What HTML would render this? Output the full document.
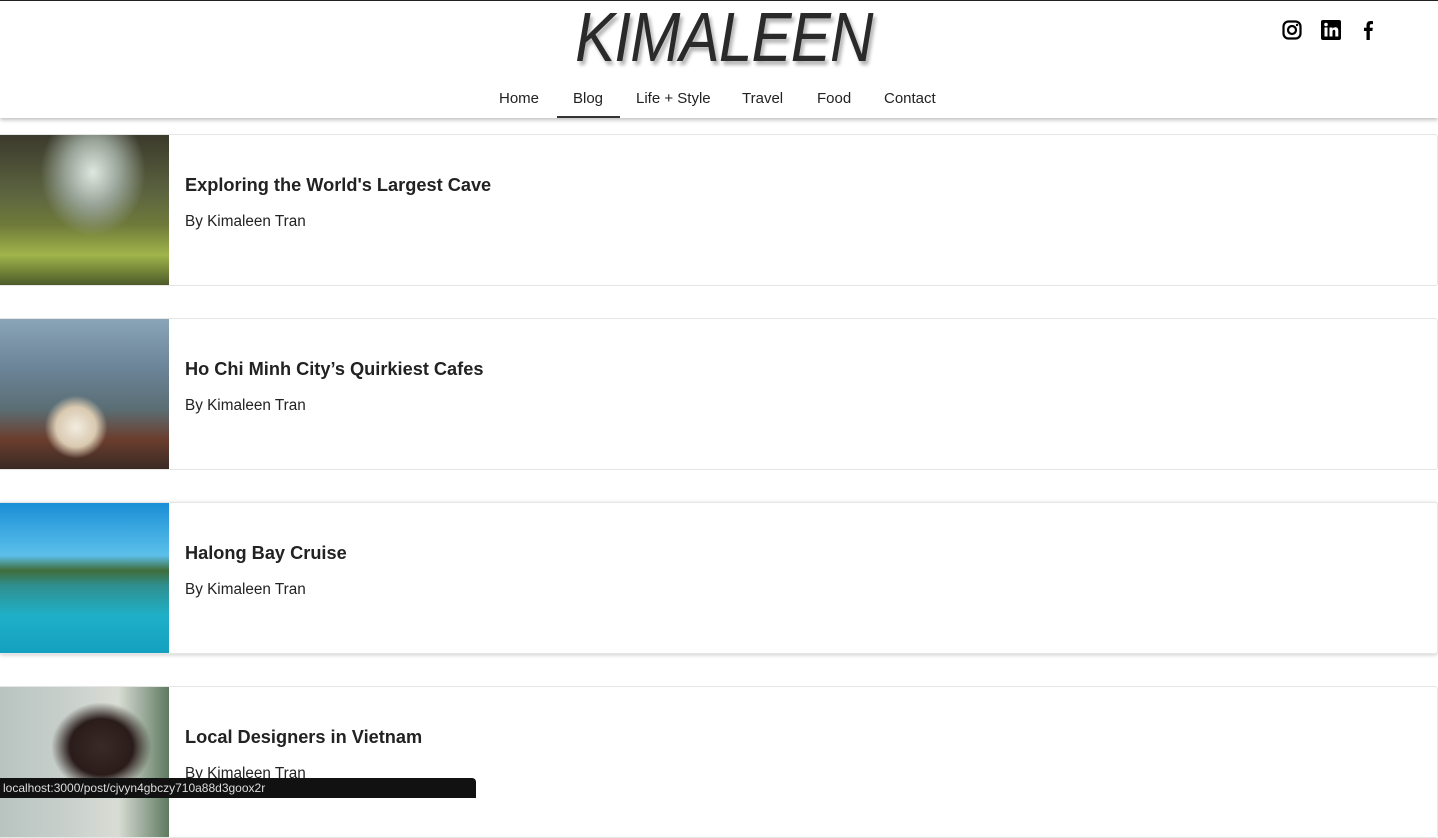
<!DOCTYPE html>
<html><head><style>
body{margin:0;width:1438px;height:798px;overflow:hidden;background:#fff;font-family:"Liberation Sans",sans-serif;position:relative}
.top{position:absolute;left:0;top:0;width:1438px;height:1px;background:#222}
header{position:absolute;left:0;top:1px;width:1438px;height:117px;background:#fff;box-shadow:0 2px 4px rgba(0,0,0,.25);z-index:2}
.logo{position:absolute;left:552px;top:-4px;width:330px;text-align:center;font-size:70px;font-style:italic;font-weight:normal;color:#2a2a2a;transform:scaleX(.86);transform-origin:center;letter-spacing:-1px;text-shadow:3px 4px 4px rgba(0,0,0,.3);line-height:80px}
nav{position:absolute;top:85px;left:0;width:1438px;text-align:center;font-size:15px;color:#222}
nav span{position:absolute;top:4px}
.ul{position:absolute;left:557px;top:115px;width:63px;height:2px;background:#333}
.icons svg{position:absolute;top:19px}
.card{position:absolute;left:0;width:1437px;height:150px;border:1px solid #e6e6e6;border-left:none;border-radius:0 3px 3px 0;background:#fff}
.img{position:absolute;left:0;top:0;width:169px;height:150px}
.t{position:absolute;left:185px;top:40px;font-size:18.2px;font-weight:bold;color:#222}
.b{position:absolute;left:185px;top:78px;font-size:15.3px;color:#222}
.status{position:absolute;left:0;top:778px;width:476px;height:20px;background:#111;color:#ddd;font-size:12px;line-height:20px;padding-left:3px;box-sizing:border-box;border-radius:0 4px 0 0;z-index:5}
</style></head><body>
<div class="top"></div>
<header>
<div class="logo">KIMALEEN</div>
<nav>
<span style="left:499px">Home</span>
<span style="left:573px">Blog</span>
<span style="left:636px">Life + Style</span>
<span style="left:742px">Travel</span>
<span style="left:817px">Food</span>
<span style="left:884px">Contact</span>
</nav>
<div class="ul"></div>
<div class="icons">
<svg style="left:1282px" width="20" height="20" viewBox="0 0 20 20"><rect x="1.5" y="1.5" width="17" height="17" rx="5" fill="none" stroke="#000" stroke-width="2.2"/><circle cx="10" cy="10" r="4" fill="none" stroke="#000" stroke-width="2.2"/><circle cx="15" cy="5" r="1.2" fill="#000"/></svg>
<svg style="left:1321px" width="20" height="20" viewBox="0 0 20 20"><rect x="0" y="0" width="20" height="20" rx="2" fill="#000"/><rect x="3.5" y="7.5" width="3" height="9" fill="#fff"/><circle cx="5" cy="4.5" r="1.8" fill="#fff"/><path d="M8.5 7.5h3v1.3c.6-1 1.6-1.5 2.8-1.5 2 0 3 1.2 3 3.6v5.6h-3v-5c0-1.2-.4-1.8-1.3-1.8-1 0-1.5.7-1.5 1.9v4.9h-3z" fill="#fff"/></svg>
<svg style="left:1363px" width="12" height="20" viewBox="0 0 12 20"><path d="M3.5 20V11H1V7.8h2.5V5.3C3.5 2.6 5 1 7.6 1c1.1 0 2 .1 2.4.2v2.9H8.4c-1.2 0-1.6.6-1.6 1.6v2.1h3l-.4 3.2H6.8V20z" fill="#000"/></svg>
</div>
</header>

<div class="card" style="top:134px"><div class="img" style="background:radial-gradient(ellipse at 55% 25%,#dfe8e0 0,#9aa59a 20%,transparent 40%),linear-gradient(180deg,#3b3a2c 0,#5d6540 40%,#6f7a3a 60%,#9fb44a 80%,#4d5a2a 100%)"></div><div class="t">Exploring the World's Largest Cave</div><div class="b">By Kimaleen Tran</div></div>
<div class="card" style="top:318px"><div class="img" style="background:radial-gradient(circle at 45% 72%,#f2ece0 0,#d9c9b0 14%,transparent 22%),linear-gradient(180deg,#8aa5b8 0,#6a8295 35%,#5a6e74 60%,#6b3e2e 80%,#3a2a24 100%)"></div><div class="t">Ho Chi Minh City’s Quirkiest Cafes</div><div class="b">By Kimaleen Tran</div></div>
<div class="card" style="top:502px;box-shadow:0 1px 4px rgba(0,0,0,.2)"><div class="img" style="background:linear-gradient(180deg,#1a8fd6 0,#5cc0ea 35%,#3f6d3a 45%,#2f8f8f 55%,#1fb0c8 75%,#14a0c0 100%)"></div><div class="t">Halong Bay Cruise</div><div class="b">By Kimaleen Tran</div></div>
<div class="card" style="top:686px"><div class="img" style="background:radial-gradient(ellipse at 60% 40%,#3a2a26 0,#2a1c1a 22%,transparent 35%),linear-gradient(90deg,#b8c4c0 0,#c9d0cc 40%,#d8dcd4 70%,#5e7a60 100%)"></div><div class="t">Local Designers in Vietnam</div><div class="b">By Kimaleen Tran</div></div>

<div class="status">localhost:3000/post/cjvyn4gbczy710a88d3goox2r</div>
</body></html>
